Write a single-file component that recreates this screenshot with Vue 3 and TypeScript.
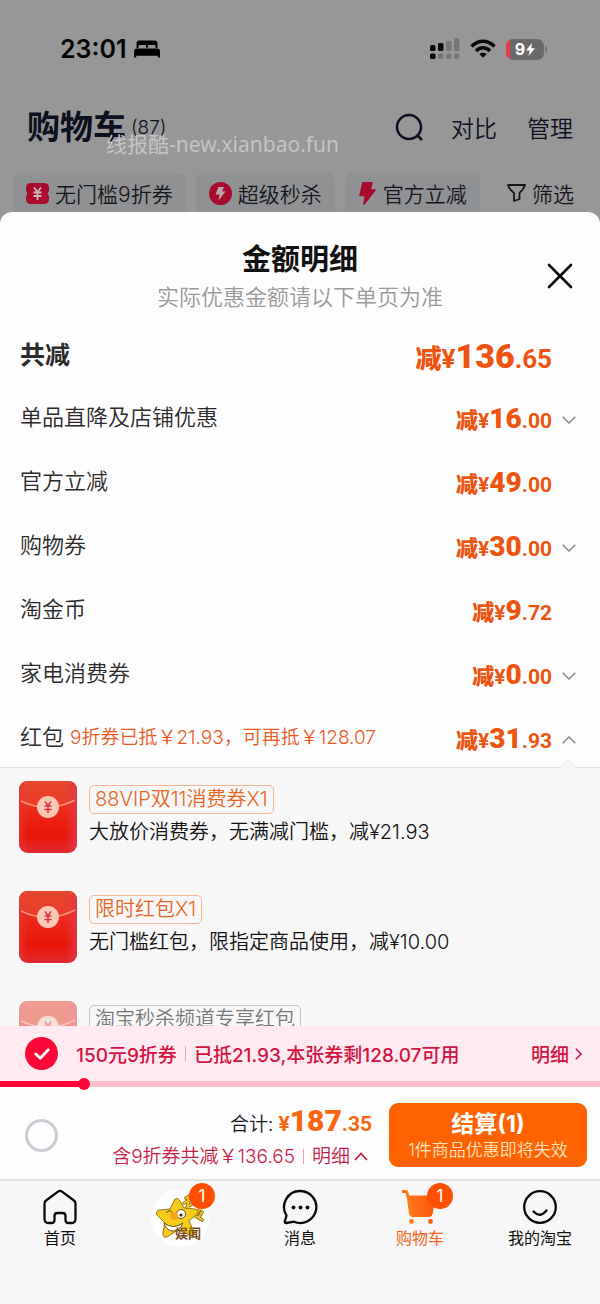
<script setup lang="ts">
import { ref } from 'vue'

interface DetailRow {
  label: string
  note?: string
  int: string
  dec: string
  toggle?: 'down' | 'up'
}

interface Coupon {
  tag: string
  desc: string
  disabled?: boolean
}

const rows: DetailRow[] = [
  { label: '单品直降及店铺优惠', int: '16', dec: '.00', toggle: 'down' },
  { label: '官方立减', int: '49', dec: '.00' },
  { label: '购物券', int: '30', dec: '.00', toggle: 'down' },
  { label: '淘金币', int: '9', dec: '.72' },
  { label: '家电消费券', int: '0', dec: '.00', toggle: 'down' },
  { label: '红包', note: '9折券已抵￥21.93，可再抵￥128.07', int: '31', dec: '.93', toggle: 'up' },
]

const coupons: Coupon[] = [
  { tag: '88VIP双11消费券X1', desc: '大放价消费券，无满减门槛，减¥21.93' },
  { tag: '限时红包X1', desc: '无门槛红包，限指定商品使用，减¥10.00' },
  { tag: '淘宝秒杀频道专享红包', desc: '', disabled: true },
]

const couponOn = ref(true)
const allOn = ref(false)
const progress = 14
</script>

<template>
  <div class="page">
    <header class="top">
      <div class="status">
        <div class="clock">
          <span>23:01</span>
          <svg width="26" height="18" viewBox="0 0 26 18">
            <path d="M2.5 8V3.2Q2.5 .5 5.2 .5H20.8Q23.5 .5 23.5 3.2V8H21.5V6.2Q21.5 5 20.3 5H15Q13.8 5 13.8 6.2V8H12.2V6.2Q12.2 5 11 5H5.7Q4.5 5 4.5 6.2V8Z" />
            <path d="M0 17.5V11.5Q0 8.5 3 8.5H23Q26 8.5 26 11.5V17.5H23.8V15.8H2.2V17.5Z" />
          </svg>
        </div>
        <div class="signals">
          <svg width="30" height="22" viewBox="0 0 30 22">
            <g fill="#0a0a0a">
              <rect x="0" y="7" width="5.5" height="6" rx="1.5" />
              <rect x="8" y="5" width="5.5" height="8" rx="1.5" />
              <rect x="0" y="15.5" width="5.5" height="5.5" rx="1.5" />
            </g>
            <g fill="#777">
              <rect x="16" y="3" width="5.5" height="10" rx="1.5" />
              <rect x="24" y="0" width="5.5" height="13" rx="1.5" />
              <rect x="8" y="15.5" width="5.5" height="5.5" rx="2" />
              <rect x="16" y="15.5" width="5.5" height="5.5" rx="2" />
              <rect x="24" y="15.5" width="5.5" height="5.5" rx="2" />
            </g>
          </svg>
          <svg width="26" height="20" viewBox="0 0 26 20" fill="none" stroke="#0a0a0a" stroke-width="3.4">
            <path d="M1.5 7.5Q6.5 2.3 13 2.3T24.5 7.5" />
            <path d="M6 12Q9 8.8 13 8.8T20 12" />
            <path d="M13 18.8L9.3 15.1Q13 12.3 16.7 15.1Z" fill="#0a0a0a" stroke="none" />
          </svg>
          <div class="battery">
            <span>9</span>
            <svg width="9" height="13" viewBox="0 0 9 13"><path d="M6 0L0 7.5H3.8L2.5 13L9 5.2H5.2Z" fill="#fff" /></svg>
          </div>
        </div>
      </div>

      <div class="titlebar">
        <h1>购物车</h1>
        <span class="count">(87)</span>
        <button class="plain search" aria-label="搜索">
          <svg width="30" height="30" viewBox="0 0 30 30" fill="none" stroke="#0c1020" stroke-width="2.5">
            <circle cx="14" cy="15" r="12" /><path d="M22 23L27 28" />
          </svg>
        </button>
        <button class="plain act">对比</button>
        <button class="plain act">管理</button>
        <span class="mark">线报酷-new.xianbao.fun</span>
      </div>

      <nav class="chips">
        <button class="chip">
          <svg width="23" height="21" viewBox="0 0 23 21">
            <path d="M5 0H18Q23 0 23 5V8Q20.5 10.5 23 13V16Q23 21 18 21H5Q0 21 0 16V13Q2.5 10.5 0 8V5Q0 0 5 0Z" fill="#a80b2c" />
            <path d="M8 4.5L11.5 9L15 4.5M7.5 9.5H15.5M7.5 13H15.5M11.5 9V17" fill="none" stroke="#c9b9b9" stroke-width="1.8" />
          </svg>
          无门槛9折券
        </button>
        <button class="chip">
          <svg width="23" height="23" viewBox="0 0 23 23">
            <circle cx="11.5" cy="11.5" r="11.5" fill="#a80b2c" />
            <path d="M9.5 5H15L13 9.5H16.5L9.5 18.5L10.5 12.5H6.5Z" fill="#b5abab" />
          </svg>
          超级秒杀
        </button>
        <button class="chip">
          <svg width="19" height="23" viewBox="0 0 19 23">
            <path d="M5 .8H14L12 8H17L6 22L7.5 13.5H2Z" fill="#a80b2c" stroke="#a80b2c" stroke-width="1.6" stroke-linejoin="round" />
          </svg>
          官方立减
        </button>
        <button class="chip filter">
          <svg width="19" height="18" viewBox="0 0 19 18" fill="none" stroke="#14161c" stroke-width="1.8" stroke-linejoin="round">
            <path d="M1 1H18Q17 5 12.5 9V15L7 17V9Q2 5 1 1Z" />
          </svg>
          筛选
        </button>
      </nav>
    </header>

    <main class="sheet">
      <div class="sheet-head">
        <h2>金额明细</h2>
        <p>实际优惠金额请以下单页为准</p>
        <button class="plain close" aria-label="关闭">
          <svg width="28" height="28" viewBox="0 0 28 28" stroke="#0a0a0a" stroke-width="2.6" stroke-linecap="round">
            <path d="M3 3L25 25M25 3L3 25" />
          </svg>
        </button>
      </div>

      <div class="row total">
        <span class="label">共减</span>
        <span class="price"><b>减</b><i>¥</i><strong>136</strong><em>.65</em></span>
      </div>
      <div v-for="r in rows" :key="r.label" class="row">
        <span class="label">{{ r.label }}</span>
        <span v-if="r.note" class="note">{{ r.note }}</span>
        <span class="price"><b>减</b><i>¥</i><strong>{{ r.int }}</strong><em>{{ r.dec }}</em></span>
        <button v-if="r.toggle" class="plain toggle" :aria-label="r.label">
          <svg width="14" height="8" viewBox="0 0 14 8" fill="none" stroke="#8a8a8a" stroke-width="1.5">
            <path :d="r.toggle === 'down' ? 'M.7 .8L7 7L13.3 .8' : 'M.7 7.2L7 1L13.3 7.2'" />
          </svg>
        </button>
      </div>

      <section class="coupons">
        <svg class="notch" width="16" height="8" viewBox="0 0 16 8">
          <path d="M0 8L8 0L16 8Z" fill="#f7f7f7" /><path d="M0 7.5L8 .5L16 7.5" fill="none" stroke="#e6e6e6" />
        </svg>
        <div class="coupon-list">
          <article v-for="c in coupons" :key="c.tag" class="coupon" :class="{ off: c.disabled }">
            <svg class="packet" width="58" height="72" viewBox="0 0 58 72">
              <defs>
                <linearGradient id="body" x1="0" y1="0" x2="0" y2="1">
                  <stop offset="0" stop-color="#e9402c" /><stop offset=".35" stop-color="#ec2c1c" />
                  <stop offset=".75" stop-color="#e81508" /><stop offset="1" stop-color="#e32a30" />
                </linearGradient>
                <linearGradient id="flap" x1="0" y1="0" x2="0" y2="1">
                  <stop offset="0" stop-color="#e4482c" /><stop offset="1" stop-color="#ec3a28" />
                </linearGradient>
                <linearGradient id="edge" x1="0" y1="0" x2="1" y2="0">
                  <stop offset="0" stop-color="#e23a3a" stop-opacity=".7" /><stop offset=".15" stop-color="#e23a3a" stop-opacity="0" />
                  <stop offset=".8" stop-color="#e23a3a" stop-opacity="0" /><stop offset="1" stop-color="#e03848" stop-opacity=".9" />
                </linearGradient>
              </defs>
              <rect width="58" height="72" rx="9" fill="url(#body)" />
              <path d="M0 19V9Q0 0 9 0H49Q58 0 58 9V19Q29 33 0 19Z" fill="url(#flap)" />
              <rect width="58" height="72" rx="9" fill="url(#edge)" />
              <path d="M2 20Q29 33 56 19" fill="none" stroke="#f6917c" stroke-width="1.5" />
              <circle cx="29" cy="26" r="11" fill="#f9c9b5" />
              <path d="M26 20.5L29 24.5L32 20.5M25.5 25H32.5M25.5 28.5H32.5M29 25V32" fill="none" stroke="#dc3340" stroke-width="1.5" />
            </svg>
            <div class="coupon-text">
              <span class="tag">{{ c.tag }}</span>
              <p v-if="c.desc">{{ c.desc }}</p>
            </div>
          </article>
        </div>
      </section>
    </main>

    <section class="promo">
      <div class="promo-row">
        <label class="tick">
          <input v-model="couponOn" type="checkbox" aria-label="使用9折券" />
          <svg width="16" height="12" viewBox="0 0 16 12" fill="none" stroke="#fff" stroke-width="2.8" stroke-linecap="round" stroke-linejoin="round">
            <path d="M1.8 6L6.3 10.2L14.2 1.8" />
          </svg>
        </label>
        <span>150元9折券</span>
        <span class="bar" />
        <span>已抵21.93,本张券剩128.07可用</span>
        <button class="plain more">
          明细
          <svg width="7" height="12" viewBox="0 0 7 12" fill="none" stroke="#c81d48" stroke-width="1.6"><path d="M.8 .8L6 6L.8 11.2" /></svg>
        </button>
      </div>
      <div class="track" role="progressbar" :aria-valuenow="progress">
        <div class="fill" :style="{ width: progress + '%' }" />
      </div>
    </section>

    <section class="pay">
      <input v-model="allOn" class="all" type="checkbox" aria-label="全选" />
      <div class="sum">
        <div class="sum-line">合计:<span class="price sum-price"><i>¥</i><strong>187</strong><em>.35</em></span></div>
        <button class="plain saved">
          含9折券共减￥136.65<span class="bar" />明细
          <svg width="14" height="9" viewBox="0 0 14 9" fill="none" stroke="#c81d48" stroke-width="1.8"><path d="M1 8L7 1.5L13 8" /></svg>
        </button>
      </div>
      <button class="checkout">
        <strong>结算(1)</strong>
        <span>1件商品优惠即将失效</span>
      </button>
    </section>

    <nav class="tabs">
      <a href="#home" class="tab">
        <svg width="34" height="36" viewBox="0 0 34 36" fill="none" stroke="#0a0a0a" stroke-width="2.3" stroke-linejoin="round">
          <path d="M15 2.6Q17 1.2 19 2.6L31 11.5Q32.5 12.7 32.5 14.5V30Q32.5 34 28.5 34H25.5Q22.5 34 22.5 31V27Q22.5 24 19.5 24H14.5Q11.5 24 11.5 27V31Q11.5 34 8.5 34H5.5Q1.5 34 1.5 30V14.5Q1.5 12.7 3 11.5Z" />
        </svg>
        <span>首页</span>
      </a>
      <a href="#feed" class="tab" aria-label="娱闻">
        <span class="icon">
          <svg width="60" height="60" viewBox="0 0 60 60">
            <circle cx="30" cy="29" r="29" fill="#fefefe" />
            <g fill="none" stroke="#8f6a0c" stroke-width="3.6" stroke-linecap="round">
              <path d="M36 9L41 6M34 14L42 10M37 18L42 15M38 10V20M44 26L52 31M49 28L52 23M47 25L49 21" />
            </g>
            <g fill="none" stroke="#f0c52a" stroke-width="2" stroke-linecap="round">
              <path d="M36 9L41 6M34 14L42 10M37 18L42 15M38 10V20M44 26L52 31M49 28L52 23M47 25L49 21" />
            </g>
            <path d="M25 10Q28 8 30 12L34 19L45 20Q50 21 47 25L39 32L44 43Q45 48 40 46L28 41L17 48Q12 49 13 43L15 34L7 26Q5 22 10 21L20 20Z" fill="#f6cc1c" stroke="#9a7410" />
            <path d="M14 34Q23 41 33 34Q29 43 22 42Q16 41 14 34Z" fill="#fff" stroke="#6b4c10" />
            <circle cx="31" cy="25" r="4.5" fill="#fff" stroke="#6b4c10" /><circle cx="31" cy="26" r="1.6" fill="#3c2a08" />
            <circle cx="24" cy="27" r="4" fill="#f4a51c" />
            <path d="M16 24Q19 20 22 23" fill="none" stroke="#5a4210" />
            <text x="25" y="49" class="logo-text">娱闻</text>
          </svg>
          <span class="badge">1</span>
        </span>
      </a>
      <a href="#messages" class="tab">
        <svg width="36" height="36" viewBox="0 0 36 36" fill="none" stroke="#0a0a0a" stroke-width="2.3" stroke-linejoin="round">
          <path d="M18.5 2A16 16 0 1 1 12 32.7L4.5 34Q2.2 34.2 3 32L4.5 26.5A16 16 0 0 1 18.5 2Z" />
          <g fill="#0a0a0a" stroke="none"><circle cx="11.5" cy="18.5" r="1.9" /><circle cx="18.5" cy="18.5" r="1.9" /><circle cx="25.5" cy="18.5" r="1.9" /></g>
        </svg>
        <span>消息</span>
      </a>
      <a href="#cart" class="tab active">
        <span class="icon">
          <svg width="36" height="36" viewBox="0 0 36 36">
            <defs><linearGradient id="cart" x1="0" y1="0" x2="1" y2="0"><stop offset="0" stop-color="#ff7a1a" /><stop offset="1" stop-color="#f9560c" /></linearGradient></defs>
            <path d="M0 2.5H3.5Q4.7 2.5 5 3.5L6 8" fill="none" stroke="#ff7415" stroke-width="2.8" />
            <path d="M4.5 6.5H33.5L31 23Q30.5 28 26.5 28H11Q7.5 28 7 24Z" fill="url(#cart)" />
            <circle cx="9.5" cy="32.5" r="2.4" fill="#ff7415" /><circle cx="28.5" cy="32.5" r="2.4" fill="#fb5f10" />
          </svg>
          <span class="badge cart-badge">1</span>
        </span>
        <span>购物车</span>
      </a>
      <a href="#mine" class="tab">
        <svg width="36" height="36" viewBox="0 0 36 36" fill="none" stroke="#0a0a0a" stroke-width="2.3" stroke-linecap="round">
          <circle cx="18" cy="18" r="15.8" /><path d="M11.5 22.5Q18 29.5 24.5 21.5" />
        </svg>
        <span>我的淘宝</span>
      </a>
    </nav>
  </div>
</template>

<style>
body {
  margin: 0;
  background: #979797;
}
</style>

<style scoped>
* {
  box-sizing: border-box;
}
.page {
  display: flex;
  flex-direction: column;
  height: 100vh;
  min-height: 1100px;
  font-family: Inter, "Noto Sans CJK SC", sans-serif;
  font-weight: 350;
  color: #2b2b2b;
  white-space: nowrap;
}
h1, h2, p {
  margin: 0;
}
svg {
  display: block;
  flex: none;
}
button {
  font: inherit;
  color: inherit;
  border: 0;
  padding: 0;
  cursor: pointer;
}
.plain {
  background: none;
}

.top {
  background: #979797;
  color: #14161c;
  flex: none;
}
.status {
  display: flex;
  justify-content: space-between;
  align-items: center;
  height: 98px;
  padding: 0 56px 0 60px;
}
.clock {
  display: flex;
  align-items: center;
  gap: 7px;
  font-size: 25px;
  font-weight: 600;
  color: #050505;
}
.signals {
  display: flex;
  align-items: center;
  gap: 10px;
}
.battery {
  position: relative;
  display: flex;
  align-items: center;
  justify-content: center;
  gap: 1px;
  width: 38px;
  height: 21px;
  border-radius: 7px;
  background: linear-gradient(90deg, #e8394a 4px, #696969 4px);
  color: #fff;
  font-size: 16px;
  font-weight: 700;
}
.battery::after {
  content: "";
  position: absolute;
  right: -3px;
  top: 7px;
  width: 2px;
  height: 7px;
  border-radius: 0 2px 2px 0;
  background: #777;
}
.titlebar {
  position: relative;
  display: flex;
  align-items: center;
  height: 58px;
  padding: 0 27px;
  color: #0c1020;
}
h1 {
  font-size: 33px;
  line-height: 44px;
  font-weight: 700;
}
.count {
  margin-left: 5px;
  font-size: 19px;
}
.search {
  margin: 0 26px 0 auto;
}
.act {
  font-size: 23px;
}
.act + .act {
  margin-left: 30px;
}
.mark {
  position: absolute;
  left: 106px;
  top: 32px;
  font-family: "Noto Sans", "Noto Sans CJK SC", sans-serif;
  font-size: 21px;
  line-height: 28px;
  font-weight: 400;
  color: #c4c4c4;
}
.chips {
  display: flex;
  gap: 10px;
  margin-top: 17px;
  padding: 0 13px;
}
.chip {
  display: flex;
  align-items: center;
  gap: 6px;
  height: 54px;
  padding: 0 13px 14px;
  border-radius: 6px;
  background: #909193;
  font-size: 21px;
}
.chip.filter {
  margin-left: auto;
  background: none;
}

.sheet {
  flex: 1;
  min-height: 0;
  display: flex;
  flex-direction: column;
  margin-top: -15px;
  border-radius: 12px 12px 0 0;
  background: #fdfdfd;
}
.sheet-head {
  position: relative;
  padding-top: 28px;
  text-align: center;
}
h2 {
  font-size: 29px;
  line-height: 40px;
  font-weight: 700;
  color: #101010;
}
.sheet-head p {
  font-size: 22px;
  line-height: 34px;
  color: #999;
}
.close {
  position: absolute;
  right: 26px;
  top: 50px;
}
.row {
  display: flex;
  align-items: center;
  flex: none;
  height: 64px;
  padding: 0 48px 0 20px;
  position: relative;
  font-size: 22px;
}
.row.total {
  height: 69px;
  padding-top: 8px;
}
.total .label {
  font-size: 25px;
  font-weight: 700;
}
.note {
  margin-left: 6px;
  font-size: 19px;
  color: #e8591f;
}
.price {
  display: flex;
  align-items: baseline;
  margin-left: auto;
  color: #ee5310;
  font-family: Roboto, "Noto Sans CJK SC", sans-serif;
  font-weight: 700;
  font-size: 21px;
  line-height: 32px;
}
.row .price {
  padding-top: 10px;
}
.price b {
  font-size: 22px;
}
.price i,
.price em {
  font-style: normal;
}
.price strong {
  font-size: 28px;
}
.total .price,
.total .price b {
  font-size: 26px;
}
.total .price strong {
  font-size: 34px;
}
.toggle {
  position: absolute;
  right: 24px;
  padding-top: 10px;
}

.coupons {
  position: relative;
  flex: 1;
  min-height: 0;
  border-top: 1px solid #dedede;
  background: #f7f7f7;
}
.coupon-list {
  height: 100%;
  overflow: hidden;
  padding: 13px 19px 0;
}
.notch {
  position: absolute;
  right: 24px;
  top: -8px;
}
.coupon {
  display: flex;
  gap: 12px;
  height: 110px;
}
.coupon-text {
  padding-top: 4px;
}
.tag {
  display: block;
  width: fit-content;
  padding: 0 5px;
  border: 1px solid #f2b596;
  border-radius: 5px;
  font-size: 20px;
  line-height: 27px;
  color: #e8651f;
}
.coupon p {
  margin-top: 4px;
  font-size: 20px;
  line-height: 28px;
  color: #111;
}
.off .packet {
  opacity: .5;
}
.off .tag {
  border-color: #c4c4c4;
  color: #777;
}

.promo {
  flex: none;
  background: #feeaf0;
  color: #d3133f;
  font-size: 19px;
  font-weight: 500;
}
.promo-row {
  display: flex;
  align-items: center;
  height: 55px;
  padding: 0 18px 0 25px;
}
.tick {
  display: grid;
  place-items: center;
  margin-right: 18px;
}
.tick input,
.tick svg {
  grid-area: 1 / 1;
}
.tick svg {
  pointer-events: none;
}
.tick input,
.all {
  appearance: none;
  margin: 0;
  width: 33px;
  height: 33px;
  border: 3px solid #c9ccd3;
  border-radius: 50%;
}
.tick input:checked {
  border: 0;
  background: #fb0838;
}
.bar {
  width: 1px;
  height: 15px;
  margin: 0 8px;
  background: #e3a9b8;
}
.more {
  display: flex;
  align-items: center;
  gap: 6px;
  margin-left: auto;
}
.track {
  height: 6px;
  background: #fbbccb;
}
.fill {
  position: relative;
  height: 6px;
  background: #fb0838;
}
.fill::after {
  content: "";
  position: absolute;
  right: -6px;
  top: -3px;
  width: 12px;
  height: 12px;
  border-radius: 50%;
  background: #fb0838;
}

.pay {
  display: flex;
  align-items: center;
  flex: none;
  height: 92px;
  padding: 4px 13px 0 25px;
  background: #fdfdfd;
}
.sum {
  display: flex;
  flex-direction: column;
  align-items: flex-end;
  margin-left: auto;
  padding-top: 7px;
}
.sum-line {
  display: flex;
  align-items: baseline;
  font-size: 19px;
  line-height: 32px;
  color: #14161c;
}
.sum-price {
  margin-left: 5px;
  color: #fb6410;
}
.sum-price strong {
  font-size: 30px;
}
.saved {
  display: flex;
  align-items: center;
  font-size: 19px;
  line-height: 32px;
  color: #c81d48;
}
.saved svg {
  margin: 0 4px;
}
.checkout {
  display: flex;
  flex-direction: column;
  align-items: center;
  justify-content: center;
  width: 33vw;
  height: 64px;
  margin-left: 17px;
  padding-top: 2px;
  border-radius: 9px;
  background: #ff6200;
  color: #fff;
}
.checkout strong {
  font-size: 23px;
  line-height: 28px;
  font-weight: 700;
}
.checkout span {
  font-size: 17px;
  line-height: 24px;
  color: #ffe2bd;
}

.tabs {
  display: grid;
  grid-template-columns: repeat(5, 1fr);
  flex: none;
  height: 125px;
  padding-top: 8px;
  border-top: 2px solid #e2e2e2;
  background: #f7f7f7;
}
.tab {
  display: flex;
  flex-direction: column;
  align-items: center;
  font-size: 16px;
  line-height: 26px;
  font-weight: 400;
  color: #111;
  text-decoration: none;
}
.tab.active {
  color: #f2641d;
}
.icon {
  position: relative;
}
.badge {
  position: absolute;
  left: 39px;
  top: -6px;
  width: 26px;
  height: 26px;
  border-radius: 50%;
  background: #ff5000;
  color: #fff;
  font-size: 17px;
  line-height: 26px;
  text-align: center;
}
.cart-badge {
  left: 25px;
}
.logo-text {
  font-size: 13px;
  font-weight: 700;
  fill: #7a4d20;
}
</style>
